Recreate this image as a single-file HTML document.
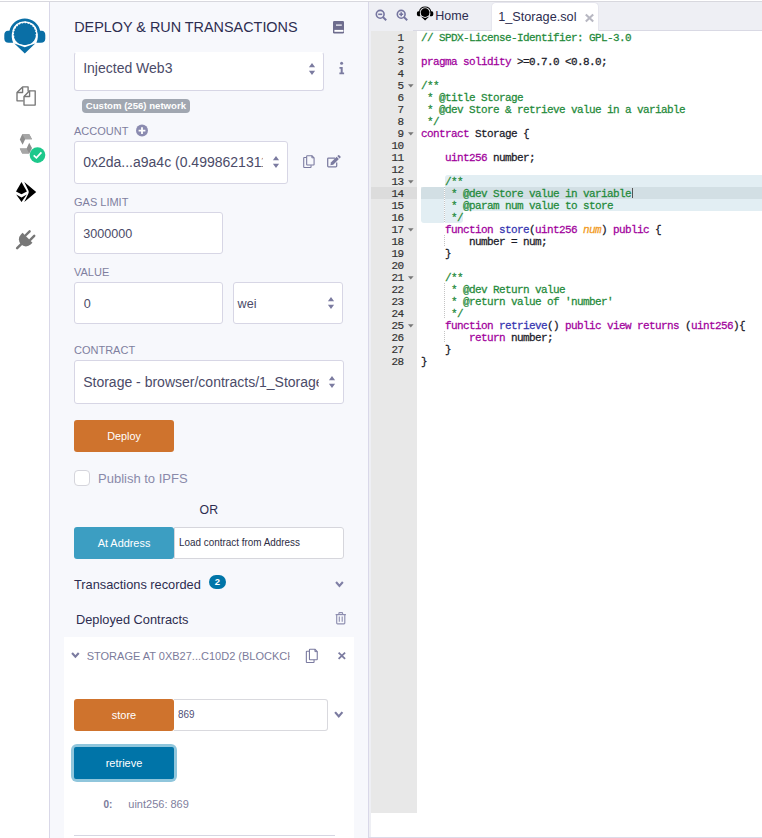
<!DOCTYPE html>
<html><head><meta charset="utf-8"><style>
html,body{margin:0;padding:0;width:762px;height:838px;overflow:hidden;background:#fff}
body{position:relative;font-family:"Liberation Sans", sans-serif}
.b{position:absolute;display:block}
.t{position:absolute;white-space:nowrap;font-family:"Liberation Sans", sans-serif}
.ln{position:absolute;left:371px;width:32.5px;text-align:right;font-family:"Liberation Mono", monospace;font-size:11px;line-height:12px;height:12px;color:#333;letter-spacing:-0.6px;-webkit-text-stroke:0.2px #333;transform:scaleY(1.04);transform-origin:0 9px}
.code{position:absolute;left:420.9px;font-family:"Liberation Mono", monospace;font-size:11px;line-height:12px;height:12px;white-space:pre;letter-spacing:-0.6px;-webkit-text-stroke:0.25px currentColor;transform:scaleY(1.04);transform-origin:0 9px}
</style></head><body>
<div class="b" style="left:0px;top:0px;width:762px;height:838px;background:#fff"></div>
<div class="b" style="left:0px;top:1px;width:762px;height:1px;background:#d8d8de"></div>
<div class="b" style="left:0px;top:2px;width:49px;height:836px;background:#fff"></div>
<div class="b" style="left:49px;top:2px;width:1px;height:836px;background:#d9d8e8"></div>
<div class="b" style="left:50px;top:2px;width:318px;height:836px;background:#f7f8fc"></div>
<div class="b" style="left:368px;top:2px;width:1px;height:836px;background:#d9d8e8"></div>
<div class="b" style="left:369px;top:2px;width:393px;height:836px;background:#eeeff4"></div>
<svg class="b" style="left:0;top:0" width="50" height="260" viewBox="0 0 50 260">
 <defs><clipPath id="gclip"><path d="M8 16 H42 V41.2 L24.8 45.2 L8 41.2 Z"/></clipPath></defs>
 <g fill="#0a6fa6">
  <path d="M10.6 31.4 A14.5 14.5 0 0 1 39 31.4" fill="none" stroke="#0a6fa6" stroke-width="2.6"/>
  <path d="M12.6 30.7 L8 30.7 Q4.3 30.9 4.3 35 L4.3 38.8 Q4.5 42.8 8.6 42.8 L13.2 42.8 Q10.6 36.6 12.6 30.7 Z"/>
  <path d="M37 30.7 L41.6 30.7 Q45.3 30.9 45.3 35 L45.3 38.8 Q45.1 42.8 41 42.8 L36.4 42.8 Q39 36.6 37 30.7 Z"/>
  <circle cx="24.8" cy="34" r="11.3" clip-path="url(#gclip)"/>
  <path d="M14.4 43.6 L24.8 47.2 L35.2 43.6 L24.8 53.6 Z"/>
 </g>
 <path d="M13.6 37 A11.6 11.6 0 1 1 36 37" fill="none" stroke="#fff" stroke-width="1.7" stroke-dasharray="1.4 1.6"/>
 <g fill="none" stroke="#777" stroke-width="1.35" stroke-linejoin="round">
  <path d="M23.6 100.8 L17 100.8 L17 92.5 L22.6 86.9 L28.1 86.9 L28.1 91.6"/>
  <path d="M22.6 86.9 L22.6 92.5 L17 92.5"/>
  <path d="M29.6 90.8 L35.2 90.8 L35.2 105.1 L24 105.1 L24 96.5 Z"/>
  <path d="M29.6 90.8 L29.6 96.5 L24 96.5"/>
 </g>
 <polygon points="22.2,134.2 29.3,134.2 32,139.3 25.2,139.3 22.6,144.8 19.8,139.5" fill="#8e8e8e"/>
 <polygon points="22.2,134.2 29.3,134.2 32,139.3 25.2,139.3" fill="#a6a6a6"/>
 <polygon points="29.2,142.7 32,148 29.3,153.6 22.2,153.6 19.8,148.5 26.6,148.5" fill="#8e8e8e"/>
 <polygon points="19.8,148.5 26.6,148.5 29.3,153.6 22.2,153.6" fill="#a6a6a6"/>
 <circle cx="37.5" cy="155.1" r="7.8" fill="#1dc88b"/>
 <path d="M33.7 155.3 L36.4 157.8 L41.4 152.4" fill="none" stroke="#fff" stroke-width="1.7"/>
 <g fill="#000">
  <path d="M21.5 182.1 L26.9 191.4 L21.5 194.3 L16 191.4 Z"/>
  <path d="M16.2 194.4 L21.5 197.4 L26.8 194.4 L21.5 201.9 Z"/>
  <path d="M24.3 182.1 L36.2 192.1 L24.3 201.9 L28.4 193.6 Q29.2 192 28.4 190.6 Z"/>
 </g>
 <g fill="#777" transform="translate(27.3 238) rotate(45)">
  <path d="M-7 -0.3 H7 V2 A7 7 0 0 1 -7 2 Z"/>
  <rect x="-4.3" y="-7.6" width="2.4" height="8" rx="1.2"/>
  <rect x="2.2" y="-7.6" width="2.4" height="8" rx="1.2"/>
  <rect x="-1.25" y="7" width="2.5" height="8.6" rx="1.25"/>
 </g>
</svg>
<div class="t" style="left:74.2px;top:19.81px;font-size:14.4px;line-height:14.4px;color:#2d2d50;font-weight:normal;">DEPLOY &amp; RUN TRANSACTIONS</div>
<svg class="b" style="left:330px;top:18px" width="18" height="18" viewBox="330 18 18 18">
 <rect x="333" y="21" width="11" height="12.4" rx="1.2" fill="#6e6d8e"/>
 <rect x="336" y="24.3" width="5.8" height="1.7" fill="#d2d2de"/>
 <rect x="334.4" y="29.9" width="9" height="1.9" fill="#fff"/>
</svg>
<div class="b" style="left:74px;top:52px;width:250px;height:39px;background:#fff;border:1px solid #d7d6e5;border-top-color:#fff;border-radius:3px;box-sizing:border-box"></div>
<div class="t" style="left:83.2px;top:60.65px;font-size:14px;line-height:14px;color:#4b4b68;font-weight:normal;">Injected Web3</div>
<svg class="b" style="left:307px;top:60.900000000000006px" width="10" height="16" viewBox="307 60.900000000000006 10 16">
 <path d="M308.9 67.10000000000001 L312 62.900000000000006 L315.1 67.10000000000001 Z M308.9 70.7 L312 74.80000000000001 L315.1 70.7 Z" fill="#7b7ba0"/></svg>
<svg class="b" style="left:336px;top:58px" width="12" height="20" viewBox="336 58 12 20">
 <circle cx="341.6" cy="63.3" r="1.5" fill="#7b7ba0"/>
 <path d="M339.5 67.1 H342.7 V72.5 H344.1 V74.2 H339.4 V72.5 H340.7 V68.8 H339.5 Z" fill="#7b7ba0"/>
</svg>
<div class="b" style="left:82px;top:99px;width:108px;height:14px;background:#a1a7b1;border-radius:4px"></div>
<div class="t" style="left:85.8px;top:101.47px;font-size:9.6px;line-height:9.6px;color:#fff;font-weight:bold;">Custom (256) network</div>
<div class="t" style="left:74px;top:125.69px;font-size:11px;line-height:11px;color:#7f7f9f;font-weight:normal;">ACCOUNT</div>
<svg class="b" style="left:134px;top:123px" width="16" height="16" viewBox="134 123 16 16">
 <circle cx="142" cy="130.6" r="6" fill="#8b8bb0"/>
 <path d="M142 127.2 V134 M138.6 130.6 H145.4" stroke="#fff" stroke-width="1.8"/>
</svg>
<div class="b" style="left:74px;top:141px;width:214px;height:43px;background:#fff;border:1px solid #d7d6e5;border-radius:3px;box-sizing:border-box"></div>
<div class="t" style="left:83.2px;top:155.15px;font-size:14px;line-height:14px;color:#4b4b68;font-weight:normal;clip-path:polygon(0 -10px,179.5px -10px,179.5px 40px,0 40px);">0x2da...a9a4c (0.4998621311 ether)</div>
<svg class="b" style="left:271px;top:154px" width="10" height="16" viewBox="271 154 10 16">
 <path d="M272.9 160.2 L276 156 L279.1 160.2 Z M272.9 163.8 L276 167.9 L279.1 163.8 Z" fill="#7b7ba0"/></svg>
<svg class="b" style="left:0;top:0" width="360" height="700" viewBox="0 0 360 700"><g transform="translate(303.2 155.2) scale(0.95 0.9)">
 <path d="M3.5 2.6 H1.1 Q0.55 2.6 0.55 3.15 V13.2 Q0.55 13.75 1.1 13.75 H7.7 Q8.25 13.75 8.25 13.2 V11.1" fill="none" stroke="#7b7ba0" stroke-width="1.15"/>
 <path d="M4.2 0.55 H9.1 L11.45 2.9 V10.45 Q11.45 11 10.9 11 H4.2 Q3.65 11 3.65 10.45 V1.1 Q3.65 0.55 4.2 0.55 Z" fill="none" stroke="#7b7ba0" stroke-width="1.15" stroke-linejoin="round"/>
 <path d="M9.1 0.55 V2.9 H11.45" fill="none" stroke="#7b7ba0" stroke-width="1.035"/>
</g></svg>
<svg class="b" style="left:0;top:0" width="360" height="200" viewBox="0 0 360 200">
 <path d="M335 158 H328.5 Q327.7 158 327.7 158.8 V166.1 Q327.7 166.9 328.5 166.9 H335.9 Q336.7 166.9 336.7 166.1 V162.4" fill="none" stroke="#7b7ba0" stroke-width="1.25"/>
 <path d="M330.4 165.2 L330.9 162.5 L336.6 156.8 L338.9 159.1 L333.2 164.8 Z" fill="#7b7ba0"/>
 <path d="M337.3 156.1 L338.2 155.2 Q338.7 154.8 339.2 155.2 L340.5 156.5 Q340.9 157 340.5 157.5 L339.6 158.4 Z" fill="#7b7ba0"/>
</svg>
<div class="t" style="left:74px;top:196.99px;font-size:11px;line-height:11px;color:#7f7f9f;font-weight:normal;">GAS LIMIT</div>
<div class="b" style="left:74px;top:212px;width:149px;height:42px;background:#fff;border:1px solid #d7d6e5;border-radius:3px;box-sizing:border-box"></div>
<div class="t" style="left:83.3px;top:228.33px;font-size:12.6px;line-height:12.6px;color:#4b4b68;font-weight:normal;">3000000</div>
<div class="t" style="left:74px;top:267.19px;font-size:11px;line-height:11px;color:#7f7f9f;font-weight:normal;">VALUE</div>
<div class="b" style="left:74px;top:282px;width:149px;height:42px;background:#fff;border:1px solid #d7d6e5;border-radius:3px;box-sizing:border-box"></div>
<div class="t" style="left:83.8px;top:297.93px;font-size:12.6px;line-height:12.6px;color:#4b4b68;font-weight:normal;">0</div>
<div class="b" style="left:233px;top:282px;width:110px;height:42px;background:#fff;border:1px solid #d7d6e5;border-radius:3px;box-sizing:border-box"></div>
<div class="t" style="left:237.6px;top:298.33px;font-size:12.6px;line-height:12.6px;color:#4b4b68;font-weight:normal;">wei</div>
<svg class="b" style="left:325.5px;top:295px" width="10" height="16" viewBox="325.5 295 10 16">
 <path d="M327.4 301.2 L330.5 297 L333.6 301.2 Z M327.4 304.8 L330.5 308.9 L333.6 304.8 Z" fill="#7b7ba0"/></svg>
<div class="t" style="left:74px;top:345.39px;font-size:11px;line-height:11px;color:#7f7f9f;font-weight:normal;">CONTRACT</div>
<div class="b" style="left:74px;top:360px;width:270px;height:44px;background:#fff;border:1px solid #d7d6e5;border-radius:3px;box-sizing:border-box"></div>
<div class="t" style="left:83.2px;top:375.15px;font-size:14px;line-height:14px;color:#4b4b68;font-weight:normal;clip-path:polygon(0 -10px,235.5px -10px,235.5px 40px,0 40px);">Storage - browser/contracts/1_Storage.sol</div>
<svg class="b" style="left:327px;top:374px" width="10" height="16" viewBox="327 374 10 16">
 <path d="M328.9 380.2 L332 376 L335.1 380.2 Z M328.9 383.8 L332 387.9 L335.1 383.8 Z" fill="#7b7ba0"/></svg>
<div class="b" style="left:74px;top:420px;width:100px;height:32px;background:#cf732d;border-radius:3px"></div>
<div class="t" style="left:74px;top:430px;width:100px;text-align:center;font-size:10.8px;line-height:12px;color:#fff">Deploy</div>
<div class="b" style="left:74px;top:470px;width:16px;height:16px;background:#fff;border:1px solid #d5d5dc;border-radius:4px;box-sizing:border-box"></div>
<div class="t" style="left:98px;top:471.70px;font-size:13px;line-height:13px;color:#8a8aaa;font-weight:normal;">Publish to IPFS</div>
<div class="t" style="left:199.6px;top:504.39px;font-size:12.3px;line-height:12.3px;color:#2d2d50;font-weight:normal;">OR</div>
<div class="b" style="left:74px;top:527px;width:100px;height:32px;background:#3c9ec2;border-radius:3px"></div>
<div class="t" style="left:74px;top:537px;width:100px;text-align:center;font-size:10.9px;line-height:12px;color:#fff">At Address</div>
<div class="b" style="left:174px;top:527px;width:170px;height:32px;background:#fff;border:1px solid #d6d6dc;border-radius:0 3px 3px 0;box-sizing:border-box"></div>
<div class="t" style="left:178.9px;top:537.07px;font-size:11.5px;line-height:11.5px;color:#2d2d44;font-weight:normal;transform:scaleX(0.86);transform-origin:0 0">Load contract from Address</div>
<div class="t" style="left:74px;top:579.16px;font-size:12.8px;line-height:12.8px;color:#2d2d50;font-weight:normal;">Transactions recorded</div>
<div class="b" style="left:209px;top:575px;width:17px;height:14px;background:#0075a8;border-radius:7px"></div>
<div class="t" style="left:209px;top:577px;width:17px;text-align:center;font-size:9.5px;line-height:10px;color:#fff;font-weight:bold">2</div>
<svg class="b" style="left:333.2px;top:578.5px" width="12.9" height="10" viewBox="333.2 578.5 12.9 10">
 <path d="M336.25 581.55 L339.65 585.45 L343.04999999999995 581.55" fill="none" stroke="#8080a6" stroke-width="2.1"/></svg>
<div class="t" style="left:76px;top:613.86px;font-size:12.8px;line-height:12.8px;color:#2d2d50;font-weight:normal;">Deployed Contracts</div>
<svg class="b" style="left:334px;top:610px" width="14" height="16" viewBox="334 610 14 16">
 <path d="M335.6 614.6 H345.9" stroke="#8e8eb0" stroke-width="1.2"/>
 <path d="M338.9 614.4 V613.3 Q338.9 612.6 339.6 612.6 H341.9 Q342.6 612.6 342.6 613.3 V614.4" fill="none" stroke="#8e8eb0" stroke-width="1.1"/>
 <path d="M336.7 615 V623 Q336.7 623.8 337.5 623.8 H344 Q344.8 623.8 344.8 623 V615" fill="none" stroke="#8e8eb0" stroke-width="1.15"/>
 <path d="M339.3 616.6 V621.8 M342.2 616.6 V621.8" stroke="#8e8eb0" stroke-width="1.1"/>
</svg>
<div class="b" style="left:64px;top:637px;width:290px;height:201px;background:#fff"></div>
<svg class="b" style="left:69.2px;top:649.6px" width="12.8" height="9.8" viewBox="69.2 649.6 12.8 9.8">
 <path d="M72.25 652.65 L75.60000000000001 656.35 L78.95 652.65" fill="none" stroke="#7b7ba0" stroke-width="2.1"/></svg>
<div class="t" style="left:86.7px;top:650.69px;font-size:11px;line-height:11px;color:#7b7b9b;font-weight:normal;clip-path:polygon(0 -10px,203px -10px,203px 40px,0 40px);">STORAGE AT 0XB27...C10D2 (BLOCKCHAIN)</div>
<svg class="b" style="left:0;top:0" width="360" height="700" viewBox="0 0 360 700"><g transform="translate(305.8 648.7) scale(1.0 1.0)">
 <path d="M3.5 2.6 H1.1 Q0.55 2.6 0.55 3.15 V13.2 Q0.55 13.75 1.1 13.75 H7.7 Q8.25 13.75 8.25 13.2 V11.1" fill="none" stroke="#7b7ba0" stroke-width="1.1"/>
 <path d="M4.2 0.55 H9.1 L11.45 2.9 V10.45 Q11.45 11 10.9 11 H4.2 Q3.65 11 3.65 10.45 V1.1 Q3.65 0.55 4.2 0.55 Z" fill="none" stroke="#7b7ba0" stroke-width="1.1" stroke-linejoin="round"/>
 <path d="M9.1 0.55 V2.9 H11.45" fill="none" stroke="#7b7ba0" stroke-width="0.9900000000000001"/>
</g></svg>
<svg class="b" style="left:336px;top:649px" width="12" height="13" viewBox="336 649 12 13">
 <path d="M338.6 652.6 L345.1 658.8 M345.1 652.6 L338.6 658.8" stroke="#7b7ba0" stroke-width="1.8"/>
</svg>
<div class="b" style="left:74px;top:699px;width:100px;height:32px;background:#cf732d;border-radius:3px"></div>
<div class="t" style="left:74px;top:709px;width:100px;text-align:center;font-size:11px;line-height:12px;color:#fff">store</div>
<div class="b" style="left:174px;top:699px;width:154px;height:32px;background:#fff;border:1px solid #d9d9de;border-left:none;border-radius:0 3px 3px 0;box-sizing:border-box"></div>
<div class="t" style="left:177.6px;top:708.77px;font-size:11.5px;line-height:11.5px;color:#4f4f78;font-weight:normal;transform:scaleX(0.86);transform-origin:0 0">869</div>
<svg class="b" style="left:331.5px;top:709px" width="13.5" height="10.5" viewBox="331.5 709 13.5 10.5">
 <path d="M334.6 712.1 L338.25 716.4 L341.9 712.1" fill="none" stroke="#7b7ba0" stroke-width="2.2"/></svg>
<div class="b" style="left:71px;top:743.5px;width:106px;height:38.5px;background:#90c6dc;border-radius:6px"></div>
<div class="b" style="left:74px;top:746.5px;width:100px;height:32.5px;background:#0074a8;border-radius:2px"></div>
<div class="t" style="left:74px;top:757px;width:100px;text-align:center;font-size:11px;line-height:12px;color:#fff">retrieve</div>
<div class="t" style="left:103.5px;top:800.13px;font-size:10px;line-height:10px;color:#7a7a9a;font-weight:bold;">0:</div>
<div class="t" style="left:128.3px;top:799.29px;font-size:11px;line-height:11px;color:#80809e;font-weight:normal;">uint256: 869</div>
<div class="b" style="left:74px;top:834.5px;width:260.5px;height:1.0px;background:#d6d6e2"></div>
<div class="b" style="left:371px;top:31px;width:391px;height:806px;background:#fff"></div>
<div class="b" style="left:371px;top:31px;width:46px;height:782px;background:#e8e8e8"></div>
<div class="b" style="left:369px;top:837px;width:393px;height:1px;background:#dcdbe9"></div>
<div class="b" style="left:413px;top:30px;width:349px;height:1px;background:#d9d9e4"></div>
<svg class="b" style="left:372px;top:6px" width="40" height="18" viewBox="372 6 40 18">
 <g fill="none" stroke="#7575a0" stroke-width="1.6">
  <circle cx="380.2" cy="14.3" r="3.9"/><path d="M383 17.1 L386.2 20.3" stroke-width="2"/><path d="M378.2 14.3 H382.2"/>
  <circle cx="401.2" cy="14.3" r="3.9"/><path d="M404 17.1 L407.2 20.3" stroke-width="2"/><path d="M399.2 14.3 H403.2 M401.2 12.3 V16.3"/>
 </g>
</svg>
<svg class="b" style="left:0;top:0" width="450" height="30" viewBox="0 0 450 30"><g transform="translate(415.18 -0.98) scale(0.4)"> <defs><clipPath id="hclip"><path d="M8 16 H42 V41.2 L24.8 45.2 L8 41.2 Z"/></clipPath></defs>
 <g fill="#000">
  <path d="M10.6 31.4 A14.5 14.5 0 0 1 39 31.4" fill="none" stroke="#000" stroke-width="2.6"/>
  <path d="M12.6 30.7 L8 30.7 Q4.3 30.9 4.3 35 L4.3 38.8 Q4.5 42.8 8.6 42.8 L13.2 42.8 Q10.6 36.6 12.6 30.7 Z"/>
  <path d="M37 30.7 L41.6 30.7 Q45.3 30.9 45.3 35 L45.3 38.8 Q45.1 42.8 41 42.8 L36.4 42.8 Q39 36.6 37 30.7 Z"/>
  <circle cx="24.8" cy="34" r="11.3" clip-path="url(#hclip)"/>
  <path d="M14.4 43.6 L24.8 47.2 L35.2 43.6 L24.8 53.6 Z"/>
 </g>
 <path d="M13.6 37 A11.6 11.6 0 1 1 36 37" fill="none" stroke="#fff" stroke-width="1.7" stroke-dasharray="1.4 1.6"/>
</g></svg>
<div class="t" style="left:435.3px;top:10.22px;font-size:12.5px;line-height:12.5px;color:#2d2d50;font-weight:normal;">Home</div>
<div class="b" style="left:491px;top:2px;width:108px;height:29px;background:#fff;border:1px solid #e6e6ee;border-bottom:none;border-radius:5px 5px 0 0;box-sizing:border-box"></div>
<div class="t" style="left:498.2px;top:10.85px;font-size:12.7px;line-height:12.7px;color:#2d2d50;font-weight:normal;">1_Storage.sol</div>
<svg class="b" style="left:583px;top:12px" width="12" height="12" viewBox="583 12 12 12">
 <path d="M585.8 14.4 L593.2 21.4 M593.2 14.4 L585.8 21.4" stroke="#b8b8c2" stroke-width="2.1"/>
</svg>
<div class="b" style="left:444.5px;top:175px;width:317.5px;height:12px;background:#e2eef3;border-radius:3px 0 0 0"></div>
<div class="b" style="left:421px;top:187px;width:341px;height:24px;background:#e2eef3;border-radius:3px 0 0 0"></div>
<div class="b" style="left:421px;top:211px;width:41.5px;height:12px;background:#e2eef3;border-radius:0 0 3px 3px"></div>
<div class="b" style="left:371px;top:187px;width:46px;height:12px;background:#dcdcdc"></div>
<div class="b" style="left:421px;top:187px;width:341px;height:12px;background:rgba(180,195,200,0.35)"></div>
<div class="b" style="left:444px;top:187px;width:1px;height:12px;background-image:repeating-linear-gradient(#c4c4c4 0 1px, #fff 1px 2px)"></div>
<div class="b" style="left:444px;top:199px;width:1px;height:12px;background-image:repeating-linear-gradient(#c4c4c4 0 1px, #fff 1px 2px)"></div>
<div class="b" style="left:444px;top:211px;width:1px;height:12px;background-image:repeating-linear-gradient(#c4c4c4 0 1px, #fff 1px 2px)"></div>
<div class="b" style="left:444px;top:235px;width:1px;height:12px;background-image:repeating-linear-gradient(#c4c4c4 0 1px, #fff 1px 2px)"></div>
<div class="b" style="left:444px;top:283px;width:1px;height:12px;background-image:repeating-linear-gradient(#c4c4c4 0 1px, #fff 1px 2px)"></div>
<div class="b" style="left:444px;top:295px;width:1px;height:12px;background-image:repeating-linear-gradient(#c4c4c4 0 1px, #fff 1px 2px)"></div>
<div class="b" style="left:444px;top:307px;width:1px;height:12px;background-image:repeating-linear-gradient(#c4c4c4 0 1px, #fff 1px 2px)"></div>
<div class="b" style="left:444px;top:331px;width:1px;height:12px;background-image:repeating-linear-gradient(#c4c4c4 0 1px, #fff 1px 2px)"></div>
<div class="b" style="left:631.5px;top:188px;width:1.0px;height:10px;background:#555"></div>
<div class="ln" style="top:32px">1</div>
<div class="code" style="top:32px"><span style="color:#1f8a3a">// SPDX-License-Identifier: GPL-3.0</span></div>
<div class="ln" style="top:44px">2</div>
<div class="ln" style="top:56px">3</div>
<div class="code" style="top:56px"><span style="color:#a1009c">pragma</span><span style="color:#1a1a28"> </span><span style="color:#a1009c">solidity</span><span style="color:#1a1a28"> >=0.7.0 <0.8.0;</span></div>
<div class="ln" style="top:68px">4</div>
<div class="ln" style="top:80px">5</div>
<div class="code" style="top:80px"><span style="color:#1f8a3a">/**</span></div>
<div class="ln" style="top:92px">6</div>
<div class="code" style="top:92px"><span style="color:#1f8a3a"> * @title Storage</span></div>
<div class="ln" style="top:104px">7</div>
<div class="code" style="top:104px"><span style="color:#1f8a3a"> * @dev Store &amp; retrieve value in a variable</span></div>
<div class="ln" style="top:116px">8</div>
<div class="code" style="top:116px"><span style="color:#1f8a3a"> */</span></div>
<div class="ln" style="top:128px">9</div>
<div class="code" style="top:128px"><span style="color:#a1009c">contract</span><span style="color:#1a1a28"> Storage {</span></div>
<div class="ln" style="top:140px">10</div>
<div class="ln" style="top:152px">11</div>
<div class="code" style="top:152px"><span style="color:#1a1a28">    </span><span style="color:#a1009c">uint256</span><span style="color:#1a1a28"> number;</span></div>
<div class="ln" style="top:164px">12</div>
<div class="ln" style="top:176px">13</div>
<div class="code" style="top:176px"><span style="color:#1f8a3a">    /**</span></div>
<div class="ln" style="top:188px">14</div>
<div class="code" style="top:188px"><span style="color:#1f8a3a">     * @dev Store value in variable</span></div>
<div class="ln" style="top:200px">15</div>
<div class="code" style="top:200px"><span style="color:#1f8a3a">     * @param num value to store</span></div>
<div class="ln" style="top:212px">16</div>
<div class="code" style="top:212px"><span style="color:#1f8a3a">     */</span></div>
<div class="ln" style="top:224px">17</div>
<div class="code" style="top:224px"><span style="color:#1a1a28">    </span><span style="color:#a1009c">function</span><span style="color:#1a1a28"> </span><span style="color:#3535b0">store</span><span style="color:#1a1a28">(</span><span style="color:#a1009c">uint256</span><span style="color:#1a1a28"> </span><span style="color:#f29a20;font-style:italic">num</span><span style="color:#1a1a28">) </span><span style="color:#a1009c">public</span><span style="color:#1a1a28"> {</span></div>
<div class="ln" style="top:236px">18</div>
<div class="code" style="top:236px"><span style="color:#1a1a28">        number = num;</span></div>
<div class="ln" style="top:248px">19</div>
<div class="code" style="top:248px"><span style="color:#1a1a28">    }</span></div>
<div class="ln" style="top:260px">20</div>
<div class="ln" style="top:272px">21</div>
<div class="code" style="top:272px"><span style="color:#1f8a3a">    /**</span></div>
<div class="ln" style="top:284px">22</div>
<div class="code" style="top:284px"><span style="color:#1f8a3a">     * @dev Return value</span></div>
<div class="ln" style="top:296px">23</div>
<div class="code" style="top:296px"><span style="color:#1f8a3a">     * @return value of 'number'</span></div>
<div class="ln" style="top:308px">24</div>
<div class="code" style="top:308px"><span style="color:#1f8a3a">     */</span></div>
<div class="ln" style="top:320px">25</div>
<div class="code" style="top:320px"><span style="color:#1a1a28">    </span><span style="color:#a1009c">function</span><span style="color:#1a1a28"> </span><span style="color:#3535b0">retrieve</span><span style="color:#1a1a28">() </span><span style="color:#a1009c">public</span><span style="color:#1a1a28"> </span><span style="color:#a1009c">view</span><span style="color:#1a1a28"> </span><span style="color:#a1009c">returns</span><span style="color:#1a1a28"> (</span><span style="color:#a1009c">uint256</span><span style="color:#1a1a28">){</span></div>
<div class="ln" style="top:332px">26</div>
<div class="code" style="top:332px"><span style="color:#1a1a28">        </span><span style="color:#a1009c">return</span><span style="color:#1a1a28"> number;</span></div>
<div class="ln" style="top:344px">27</div>
<div class="code" style="top:344px"><span style="color:#1a1a28">    }</span></div>
<div class="ln" style="top:356px">28</div>
<div class="code" style="top:356px"><span style="color:#1a1a28">}</span></div>
<svg class="b" style="left:407px;top:82.5px" width="8" height="6" viewBox="0 0 8 6"><path d="M1 1.2 H6.6 L3.8 4.6 Z" fill="#777"/></svg>
<svg class="b" style="left:407px;top:130.5px" width="8" height="6" viewBox="0 0 8 6"><path d="M1 1.2 H6.6 L3.8 4.6 Z" fill="#777"/></svg>
<svg class="b" style="left:407px;top:178.5px" width="8" height="6" viewBox="0 0 8 6"><path d="M1 1.2 H6.6 L3.8 4.6 Z" fill="#777"/></svg>
<svg class="b" style="left:407px;top:226.5px" width="8" height="6" viewBox="0 0 8 6"><path d="M1 1.2 H6.6 L3.8 4.6 Z" fill="#777"/></svg>
<svg class="b" style="left:407px;top:274.5px" width="8" height="6" viewBox="0 0 8 6"><path d="M1 1.2 H6.6 L3.8 4.6 Z" fill="#777"/></svg>
<svg class="b" style="left:407px;top:322.5px" width="8" height="6" viewBox="0 0 8 6"><path d="M1 1.2 H6.6 L3.8 4.6 Z" fill="#777"/></svg>
</body></html>
